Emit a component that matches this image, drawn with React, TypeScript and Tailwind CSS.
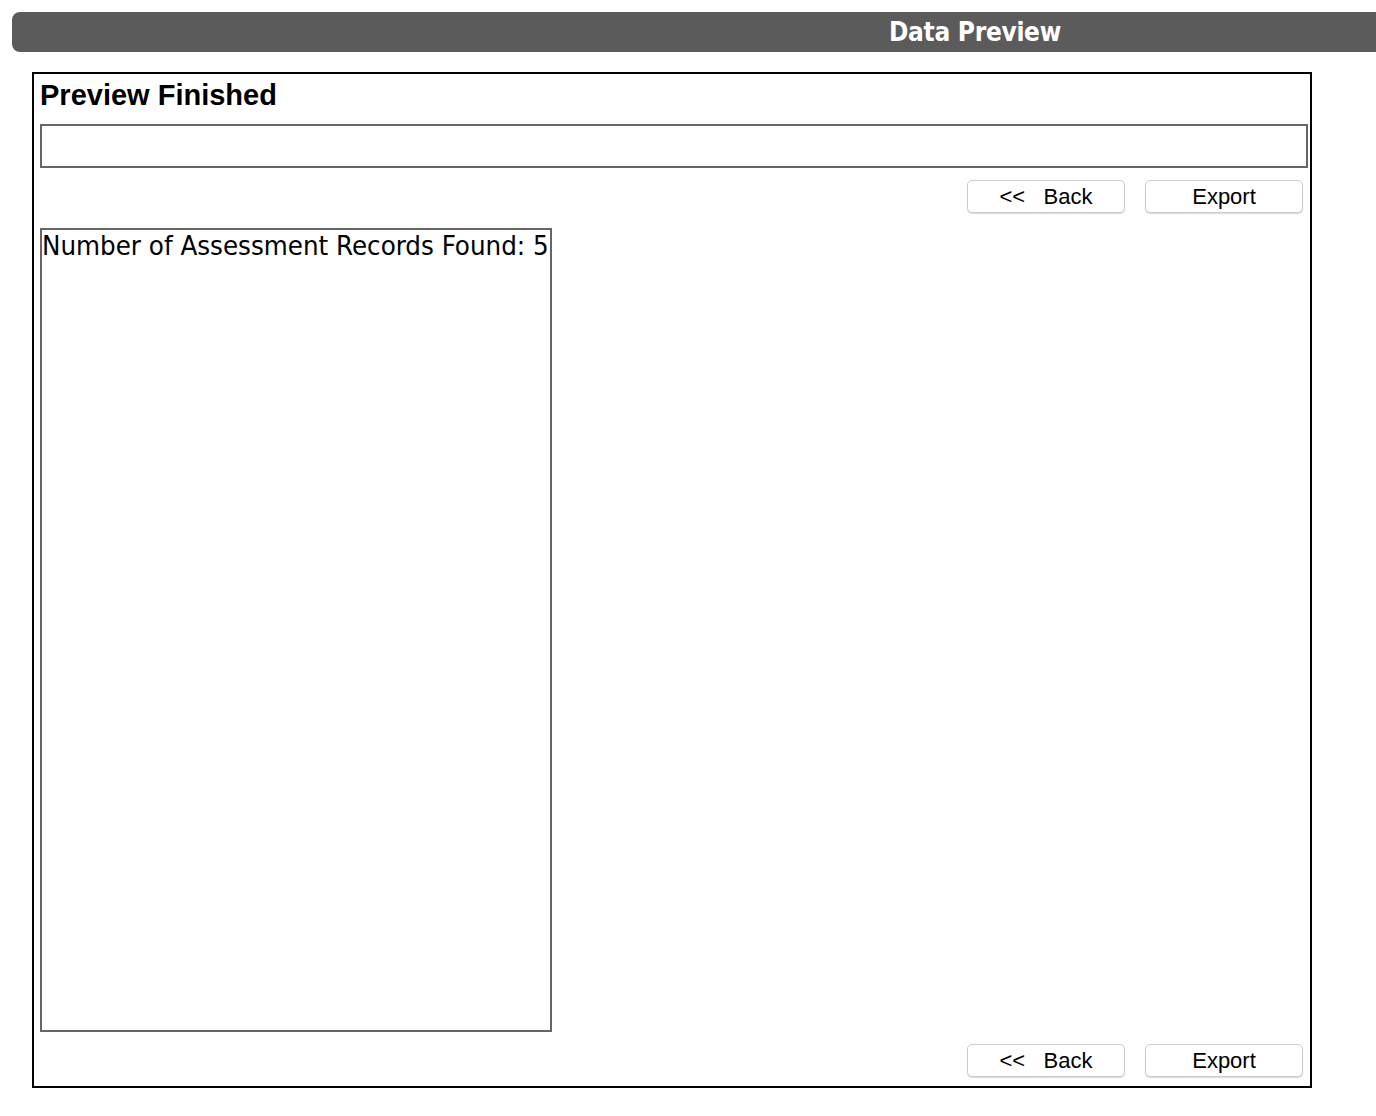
import React from 'react'

function ActionButtons() {
  return (
    <div className="flex justify-end gap-5 mr-[5px]">
      <button className="w-[158px] h-[33px] bg-white border border-[#cccccc] rounded-[5px] shadow-[0_1px_1px_rgba(0,0,0,0.15)] text-[22px] text-black font-['Liberation_Sans',Arial,sans-serif] leading-none">
        {'<<\u00a0\u00a0\u00a0Back'}
      </button>
      <button className="w-[158px] h-[33px] bg-white border border-[#cccccc] rounded-[5px] shadow-[0_1px_1px_rgba(0,0,0,0.15)] text-[22px] text-black font-['Liberation_Sans',Arial,sans-serif] leading-none">
        Export
      </button>
    </div>
  )
}

export default function App() {
  return (
    <div className="min-h-[1116px] bg-white overflow-hidden">
      {/* header bar, wider than the window so its title sits right of centre */}
      <div className="pt-3 pl-3">
        <div className="w-[1926px] h-10 bg-[#5b5b5b] rounded-l-lg flex items-center justify-center">
          <span className="text-white font-bold text-[26px] font-['DejaVu_Sans_Condensed','DejaVu_Sans',sans-serif] tracking-[-0.3px]">
            Data Preview
          </span>
        </div>
      </div>

      <div className="ml-8 mt-5 w-[1280px] h-[1016px] border-2 border-black pl-[6px] pr-[2px] pt-[5px] flex flex-col">
        <h1 className="font-['Liberation_Sans',Arial,sans-serif] font-bold text-[29px] leading-[33px] text-black">
          Preview Finished
        </h1>

        <div className="mt-3 h-[44px] border-2 border-[#666666]" />

        <div className="mt-3">
          <ActionButtons />
        </div>

        <div className="mt-[15px] w-[512px] h-[804px] border-2 border-[#666666]">
          <p className="text-[27.4px] leading-[32px] text-black font-['DejaVu_Sans_Condensed','DejaVu_Sans',sans-serif]">
            Number of Assessment Records Found: 5
          </p>
        </div>

        <div className="mt-3">
          <ActionButtons />
        </div>
      </div>
    </div>
  )
}
